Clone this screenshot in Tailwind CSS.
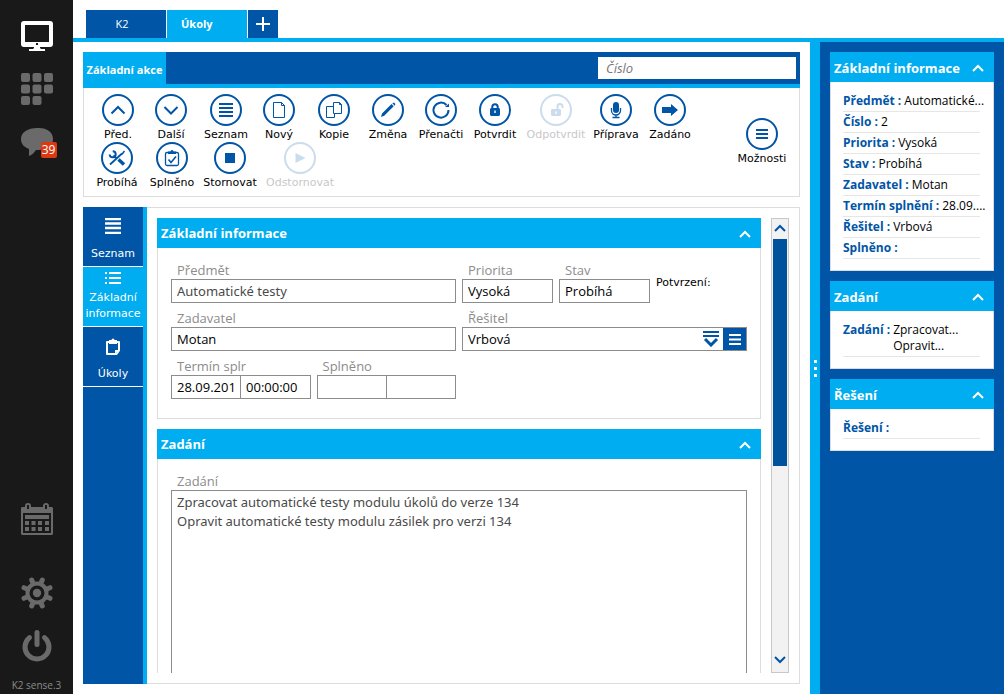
<!DOCTYPE html>
<html lang="cs">
<head>
<meta charset="utf-8">
<meta name="viewport" content="width=device-width, initial-scale=1">
<title>K2 – Úkoly</title>
<script src="https://cdn.jsdelivr.net/npm/@tailwindcss/browser@4"></script>
</head>
<body class="flex h-screen overflow-hidden bg-white font-['Open_Sans','Noto_Sans',sans-serif] text-[13px] text-black">

<svg class="hidden" aria-hidden="true">
  <symbol id="up" viewBox="0 0 12 8"><path d="M1 7 6 2l5 5" fill="none" stroke="currentColor" stroke-width="2"/></symbol>
  <symbol id="down" viewBox="0 0 12 8"><path d="M1 1l5 5 5-5" fill="none" stroke="currentColor" stroke-width="2"/></symbol>
  <symbol id="ring" viewBox="0 0 32 32"><circle cx="16" cy="16" r="15" fill="none" stroke="currentColor" stroke-width="2"/></symbol>
</svg>

<!-- Application bar -->
<nav class="relative flex w-[73px] shrink-0 flex-col items-center bg-[#191919] pt-[21px] text-[#6a6a6a]">
  <button aria-label="Plocha" class="text-white"><svg class="size-8" viewBox="0 0 32 32"><path fill="currentColor" fill-rule="evenodd" d="M3 0h26a3 3 0 0 1 3 3v20a3 3 0 0 1-3 3H19v1l1 1h4v2H8v-2h4l1-1v-1H3a3 3 0 0 1-3-3V3a3 3 0 0 1 3-3zM4 4v17h24V4zM15 22v2h2v-2z"/></svg></button>
  <button aria-label="Moduly" class="mt-5"><svg class="size-8" viewBox="0 0 32 32" fill="currentColor"><rect width="9" height="9" rx="2"/><rect x="11.500" width="9" height="9" rx="2"/><rect x="23" width="9" height="9" rx="2"/><rect y="11.500" width="9" height="9" rx="2"/><rect x="11.500" y="11.500" width="9" height="9" rx="2"/><rect x="23" y="11.500" width="9" height="9" rx="2"/><rect y="23" width="9" height="9" rx="2"/><rect x="11.500" y="23" width="9" height="9" rx="2"/></svg></button>
  <button aria-label="Zprávy" class="relative mt-5"><svg class="size-8" viewBox="0 0 32 32" fill="currentColor"><path d="M16 3h2c8 0 14 4 14 11s-6 10-14 11h-3c-2 3-4 5-7 6v-7C3 22 0 19 0 14 0 7 7 3 16 3z"/></svg><span class="absolute top-[17px] left-5 h-4 w-4 rounded-[2px] bg-[#dc3912] text-center text-[12px] leading-4 text-white">39</span></button>
  <div class="grow"></div>
  <button aria-label="Kalendář"><svg class="size-8" viewBox="0 0 32 32"><path fill="currentColor" fill-rule="evenodd" d="M1 4h3V3a3 3 0 0 1 6 0v1h12V3a3 3 0 0 1 6 0v1h3l1 1v26l-1 1H1l-1-1V5zM2 10v20h28V10zM6 2v4h2V2zM24 2v4h2V2z"/><path fill="currentColor" d="M4 12h24v4H4zM4 18h4v4H4zm6.500 0h4v4h-4zm6.500 0h4v4h-4zm7 0h4v4h-4zM4 24h4v4H4zm6.500 0h4v4h-4zm6.500 0h4v4h-4zm7 0h4v4h-4z"/></svg></button>
  <button aria-label="Nastavení" class="mt-[42px]"><svg class="size-8" viewBox="-16 -16 32 32"><g stroke="currentColor" stroke-width="5" stroke-linecap="round"><path d="M-5.300-13 5.300 13M5.300-13-5.300 13M-13-5.300 13 5.300M-13 5.300 13-5.300"/></g><circle r="11.500" fill="currentColor"/><circle r="7.500" fill="#191919"/><circle r="4.200" fill="currentColor"/></svg></button>
  <button aria-label="Ukončit" class="mt-[21px]"><svg class="size-8" viewBox="0 0 32 32" fill="none" stroke="currentColor" stroke-linecap="round" stroke-width="5"><path d="M16 2.500v12"/><path d="M8.500 7.600a12 12 0 1 0 15 0"/></svg></button>
  <p class="mt-[15px] mb-px text-[10px] leading-4 whitespace-nowrap text-[#8a8a8a]">K2 sense.3</p>
</nav>

<div class="flex min-w-0 grow flex-col">
  <!-- Document tabs -->
  <div class="flex gap-px border-b-4 border-[#00adf0] px-[13px] pt-[10px] text-[11px] text-white">
    <button class="h-7 w-20 bg-[#0055a6] pr-2">K2</button>
    <button class="h-7 w-20 bg-[#00adf0] pl-[14px] text-left font-bold">Úkoly</button>
    <button aria-label="Nová záložka" class="flex h-7 w-[30px] items-center justify-center bg-[#0055a6]"><svg class="size-[14px]" viewBox="0 0 14 14"><path d="M7 0v14M0 7h14" stroke="currentColor" stroke-width="2"/></svg></button>
  </div>

  <div class="flex min-h-0 grow">
    <main class="flex min-w-0 grow flex-col gap-[10px] p-[10px]">
      <!-- Ribbon -->
      <section>
        <div class="flex h-9 items-stretch border-b-4 border-[#00adf0] bg-[#0055a6]">
          <button class="-mb-1 w-[83px] bg-[#00adf0] text-[11px] font-bold whitespace-nowrap text-white">Základní akce</button>
          <div class="grow"></div>
          <input aria-label="Číslo" placeholder="Číslo" class="mt-[5px] mr-1 h-[22px] w-[198px] bg-white px-2 text-[13px] italic outline-none placeholder:text-[#777]">
        </div>
        <div class="flex border border-t-0 border-[#dcdcdc] pt-[6px] pb-[6px] pl-[9px] font-['DejaVu_Sans',sans-serif] text-[11px] leading-[18px] text-black">
          <div class="flex grow flex-wrap [&>button]:flex [&>button]:h-12 [&>button]:flex-col [&>button]:items-center [&>button]:whitespace-nowrap [&_svg]:size-8 [&_svg]:shrink-0 [&_svg]:text-[#0055a6]">
            <button class="w-[50px]"><svg viewBox="0 0 32 32"><use href="#ring"/><path d="M9.500 19.500 16 13l6.500 6.500" fill="none" stroke="currentColor" stroke-width="2"/></svg>Před.</button>
            <button class="w-[56px]"><svg viewBox="0 0 32 32"><use href="#ring"/><path d="M9.500 13 16 19.500 22.500 13" fill="none" stroke="currentColor" stroke-width="2"/></svg>Další</button>
            <button class="w-[54px]"><svg viewBox="0 0 32 32"><use href="#ring"/><path d="M9 10h14M9 14h14M9 18h14M9 22h14" stroke="currentColor" stroke-width="2"/></svg>Seznam</button>
            <button class="w-[52px]"><svg viewBox="0 0 32 32"><use href="#ring"/><path d="M10.500 8.500h8l3 3v12h-11zM18.500 8.500v3h3" fill="none" stroke="currentColor"/></svg>Nový</button>
            <button class="w-[58px]"><svg viewBox="0 0 32 32"><use href="#ring"/><path d="M15.500 8.500h6l2 2v9h-8zM21.500 8.500v2h2M15.500 12.500h-7v11h8v-4" fill="none" stroke="currentColor"/></svg>Kopie</button>
            <button class="w-[50px]"><svg viewBox="0 0 32 32"><use href="#ring"/><path d="M9 23l1-3.500L19.500 10l2.200 2.200-9.500 9.500zM20.300 9.300 22 8.600l1.400 1.400-.7 1.700z" fill="currentColor"/></svg>Změna</button>
            <button class="w-[56px]"><svg viewBox="0 0 32 32"><use href="#ring"/><path d="M23.500 16A7.500 7.500 0 1 1 21.500 11" fill="none" stroke="currentColor" stroke-width="2"/><path d="M20 13h4V9.500z" fill="currentColor"/></svg>Přenačti</button>
            <button class="w-[52px]"><svg viewBox="0 0 32 32"><use href="#ring"/><path d="M13.300 15v-2a2.700 2.700 0 0 1 5.400 0v2" fill="none" stroke="currentColor" stroke-width="2"/><path fill="currentColor" fill-rule="evenodd" d="M12 14h8l1 1v6l-1 1h-8l-1-1v-6zm3.300 2.500V19h1.400v-2.500z"/></svg>Potvrdit</button>
            <button disabled class="w-[70px] text-[#c8c8c8]"><svg class="opacity-20" viewBox="0 0 32 32"><use href="#ring"/><path d="M17.500 15v-2.500a2.500 2.500 0 0 1 5 0V14" fill="none" stroke="currentColor" stroke-width="2"/><path fill="currentColor" fill-rule="evenodd" d="M12 15h8l1 1v5l-1 1h-8l-1-1v-5zm3.300 2.500V20h1.400v-2.500z"/></svg>Odpotvrdit</button>
            <button class="w-[50px]"><svg viewBox="0 0 32 32"><use href="#ring"/><rect x="13" y="8" width="6" height="11" rx="3" fill="currentColor"/><path d="M11.500 14v2.500a4.500 4.500 0 0 0 9 0V14M16 21v3M12.500 23.500h7" fill="none" stroke="currentColor" stroke-width="1.300"/></svg>Příprava</button>
            <button class="w-[58px]"><svg viewBox="0 0 32 32"><use href="#ring"/><path d="M8 13h9v-3l7 6-7 6v-3H8z" fill="currentColor"/></svg>Zadáno</button>
            <button class="w-[48px]"><svg viewBox="0 0 32 32"><use href="#ring"/><path d="M12.500 13.500 15 16M9 22.500l12-11" fill="none" stroke="currentColor" stroke-width="1.800"/><path d="M21 12.200 23.500 9" stroke="currentColor" stroke-width="1.500"/><path d="M17.500 17.500 23 22.500" stroke="currentColor" stroke-width="3.400"/><path d="M8.700 12.500a3 3 0 1 0 3-3.200" fill="none" stroke="currentColor" stroke-width="2"/></svg>Probíhá</button>
            <button class="w-[62px]"><svg viewBox="0 0 32 32"><use href="#ring"/><rect x="9.500" y="10.500" width="13" height="13" rx="1.500" fill="none" stroke="currentColor" stroke-width="1.300"/><path d="M12 12V9.500h2.500a1.500 1.500 0 0 1 3 0H20V12z" fill="currentColor"/><path d="M12.500 17.500l2.500 3 5-6" fill="none" stroke="currentColor" stroke-width="1.600"/></svg>Splněno</button>
            <button class="w-[54px]"><svg viewBox="0 0 32 32"><use href="#ring"/><path d="M11 11h10v10H11z" fill="currentColor"/></svg>Stornovat</button>
            <button disabled class="w-[86px] text-[#c8c8c8]"><svg class="opacity-20" viewBox="0 0 32 32"><use href="#ring"/><path d="M11.500 11v10l10-5z" fill="currentColor"/></svg>Odstornovat</button>
          </div>
          <button class="mt-6 flex w-[74px] shrink-0 flex-col items-center self-start"><svg class="size-8 text-[#0055a6]" viewBox="0 0 32 32"><use href="#ring"/><path d="M10 12h12M10 16h12M10 20h12" stroke="currentColor" stroke-width="2"/></svg>Možnosti</button>
        </div>
      </section>

      <div class="flex min-h-0 grow">
        <!-- Page navigation -->
        <nav class="flex w-16 shrink-0 flex-col border-r-4 border-[#00adf0] bg-[#0055a6] font-['DejaVu_Sans',sans-serif] text-[11px] leading-4 text-white">
          <button class="flex h-[60px] flex-col items-center border-b border-white pt-[11px]"><svg class="h-[16px] w-4" viewBox="0 0 16 16"><path d="M0 1h16M0 5.500h16M0 10h16M0 15h16" stroke="currentColor" stroke-width="2.500"/></svg><span class="mt-3">Seznam</span></button>
          <button class="flex h-[60px] flex-col items-center border-b border-white bg-[#00adf0] pt-[5px]"><svg class="h-3 w-4 shrink-0" viewBox="0 0 16 12"><path d="M0 1h2M4 1h12M0 6h2M4 6h12M0 11h2M4 11h12" stroke="currentColor" stroke-width="2"/></svg><span class="mt-[6px]">Základní<br>informace</span></button>
          <button class="flex h-[60px] flex-col items-center border-b border-white pt-[11px]"><svg class="h-[17px] w-4 shrink-0" viewBox="0 0 16 17"><path d="M2 4h12v8.500L11.500 16H2z" fill="none" stroke="currentColor" stroke-width="2" stroke-linejoin="round"/><path d="M4 6V2h2.500a1.500 1.500 0 0 1 3 0H12v4z" fill="currentColor"/><path d="M10 16v-4h4z" fill="currentColor"/></svg><span class="mt-[11px]">Úkoly</span></button>
        </nav>

        <!-- Task form -->
        <div class="flex min-w-0 grow gap-[10px] border border-l-0 border-[#dcdcdc] p-[10px]">
          <form class="flex min-w-0 grow flex-col gap-[10px] [&_label]:flex [&_label]:h-6 [&_label]:items-end [&_label]:pl-[6px] [&_label]:leading-[18px] [&_label]:whitespace-nowrap [&_label]:text-[#8c8c8c] [&_input]:h-6 [&_input]:w-full [&_input]:min-w-0 [&_input]:border [&_input]:border-[#8c8c8c] [&_input]:px-[5px] [&_input]:outline-none">
            <section>
              <button type="button" class="flex h-[30px] w-full items-center justify-between bg-[#00adf0] pt-[2px] pr-[10px] pl-1 font-bold text-white">Základní informace<svg class="h-2 w-3"><use href="#up"/></svg></button>
              <div class="grid grid-cols-2 gap-x-[6px] border border-t-0 border-[#dcdcdc] px-[13px] pt-[7px] pb-[19px]">
                <div><label for="predmet">Předmět</label><input id="predmet" value="Automatické testy" class="font-['Noto_Sans',sans-serif] text-[#4a4a4a]"></div>
                <div class="grid grid-cols-3 gap-x-[6px]">
                  <div><label for="priorita">Priorita</label><input id="priorita" value="Vysoká"></div>
                  <div><label for="stav">Stav</label><input id="stav" value="Probíhá"></div>
                  <p class="pt-5 font-['DejaVu_Sans',sans-serif] text-[11px] leading-4">Potvrzení:</p>
                </div>
                <div><label for="zadavatel">Zadavatel</label><input id="zadavatel" value="Motan"></div>
                <div><label for="resitel">Řešitel</label>
                  <div class="flex h-6 border border-[#8c8c8c]">
                    <input id="resitel" value="Vrbová" class="h-[22px]! grow border-0!">
                    <button type="button" aria-label="Rozbalit" class="flex w-6 shrink-0 items-center justify-center text-[#0055a6]"><svg class="h-4 w-4" viewBox="0 0 16 16"><path d="M0 1h16M0 5h16" stroke="currentColor" stroke-width="2"/><path d="M2 8l6 6 6-6" fill="none" stroke="currentColor" stroke-width="3"/></svg></button>
                    <button type="button" aria-label="Vybrat ze seznamu" class="flex w-[23px] shrink-0 items-center justify-center bg-[#0055a6] text-white"><svg class="h-[11px] w-3" viewBox="0 0 12 11"><path d="M0 1h12M0 5.500h12M0 10h12" stroke="currentColor" stroke-width="2"/></svg></button>
                  </div>
                </div>
                <div class="grid grid-cols-2 gap-x-[6px]">
                  <div><label for="termin">Termín splr</label><div class="flex"><input id="termin" value="28.09.201"><input aria-label="Čas termínu" value="00:00:00" class="border-l-0!"></div></div>
                  <div><label for="splneno">Splněno</label><div class="flex"><input id="splneno"><input aria-label="Čas splnění" class="border-l-0!"></div></div>
                </div>
              </div>
            </section>
            <section class="flex min-h-0 grow flex-col">
              <button type="button" class="flex h-[30px] w-full shrink-0 items-center justify-between bg-[#00adf0] pt-[2px] pr-[10px] pl-1 font-bold text-white">Zadání<svg class="h-2 w-3"><use href="#up"/></svg></button>
              <div class="flex min-h-0 grow flex-col border-x border-[#dcdcdc] px-[13px] pt-[7px]">
                <label for="zadani">Zadání</label>
                <textarea id="zadani" class="w-full grow resize-none overflow-hidden border border-b-0 border-[#8c8c8c] px-[5px] pt-[2px] font-['Noto_Sans',sans-serif] leading-[19px] text-[#4a4a4a] outline-none">Zpracovat automatické testy modulu úkolů do verze 134
Opravit automatické testy modulu zásilek pro verzi 134</textarea>
              </div>
            </section>
          </form>
          <div class="flex w-[18px] shrink-0 flex-col border border-[#c8c8c8] bg-[#f2f2f2] px-px text-[#0055a6]">
            <button aria-label="Nahoru" class="flex h-5 shrink-0 items-center justify-center pb-[3px]"><svg class="h-2 w-3"><use href="#up"/></svg></button>
            <div class="flex min-h-0 grow flex-col"><div class="h-5/9 bg-[#00529c]"></div></div>
            <button aria-label="Dolů" class="flex h-6 shrink-0 items-center justify-center"><svg class="h-2 w-3"><use href="#down"/></svg></button>
          </div>
        </div>
      </div>
    </main>

    <!-- Preview panel -->
    <button aria-label="Změnit šířku panelu" class="flex w-[10px] shrink-0 flex-col items-center justify-center gap-1 bg-[#00adf0]"><span class="size-[3px] bg-white"></span><span class="size-[3px] bg-white"></span><span class="size-[3px] bg-white"></span></button>
    <aside class="flex w-[184px] shrink-0 flex-col gap-[10px] bg-[#0055a6] p-[10px] text-[12px] leading-4 [&_dt]:shrink-0 [&_dt]:font-bold [&_dt]:text-[#0055a6] [&_dd]:whitespace-nowrap [&_dl>div]:flex [&_dl>div]:min-h-[21px] [&_dl>div]:gap-[3px] [&_dl>div]:border-b [&_dl>div]:border-[#e6e6e6] [&_dl>div]:pt-[2px] [&_dl]:border [&_dl]:border-t-0 [&_dl]:border-[#dcdcdc] [&_dl]:bg-white [&_dl]:pr-[13px] [&_dl]:pl-3 [&_dl]:pt-[9px] [&_dl]:pb-[11px]">
      <section>
        <button class="flex h-[30px] w-full items-center justify-between bg-[#00adf0] pt-[2px] pr-[10px] pl-1 text-[13px] font-bold whitespace-nowrap text-white">Základní informace<svg class="h-2 w-3 shrink-0"><use href="#up"/></svg></button>
        <dl>
          <div><dt>Předmět :</dt><dd>Automatické...</dd></div>
          <div><dt>Číslo :</dt><dd>2</dd></div>
          <div><dt>Priorita :</dt><dd>Vysoká</dd></div>
          <div><dt>Stav :</dt><dd>Probíhá</dd></div>
          <div><dt>Zadavatel :</dt><dd>Motan</dd></div>
          <div><dt>Termín splnění :</dt><dd>28.09....</dd></div>
          <div><dt>Řešitel :</dt><dd>Vrbová</dd></div>
          <div><dt>Splněno :</dt><dd></dd></div>
        </dl>
      </section>
      <section>
        <button class="flex h-[30px] w-full items-center justify-between bg-[#00adf0] pt-[2px] pr-[10px] pl-1 text-[13px] font-bold text-white">Zadání<svg class="h-2 w-3"><use href="#up"/></svg></button>
        <dl><div class="pb-[2px]"><dt>Zadání :</dt><dd>Zpracovat...<br>Opravit...</dd></div></dl>
      </section>
      <section>
        <button class="flex h-[30px] w-full items-center justify-between bg-[#00adf0] pt-[2px] pr-[10px] pl-1 text-[13px] font-bold text-white">Řešení<svg class="h-2 w-3"><use href="#up"/></svg></button>
        <dl><div><dt>Řešení :</dt><dd></dd></div></dl>
      </section>
    </aside>
  </div>
</div>
</body>
</html>
